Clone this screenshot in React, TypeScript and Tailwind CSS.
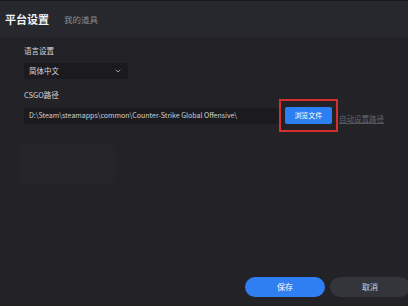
import { ChevronDown } from "lucide-react";

const font = { fontFamily: '"Noto Sans CJK SC", "Noto Sans", sans-serif' };

export default function App() {
  return (
    <div
      className="w-[408px] h-[306px] overflow-hidden flex flex-col bg-[#222227] text-white"
      style={font}
    >
      {/* Header tabs */}
      <div className="h-[37px] shrink-0 flex items-center px-[5px] bg-[#27282d] border-t border-[#18181b]">
        <span className="text-[11px] font-bold leading-none text-[#f2f2f2]">平台设置</span>
        <span className="ml-[15px] text-[8.5px] leading-none text-[#8b8b92]">我的道具</span>
      </div>

      {/* Body */}
      <div className="flex-1 px-[24px] pt-[9px]">
        <div className="text-[7.5px] leading-[10px] text-[#d8d8dc]">语言设置</div>
        <div className="mt-[7px] w-[104px] h-[16px] bg-[#1b1b1f] rounded-[2px] flex items-center justify-between pl-[5px] pr-[6px]">
          <span className="text-[7.5px] leading-none text-[#d4d4d8]">简体中文</span>
          <ChevronDown className="w-[8px] h-[8px] text-[#b5b5bb]" strokeWidth={2.5} />
        </div>

        <div className="mt-[11px] text-[7.5px] leading-[10px] text-[#d8d8dc]">CSGO路径</div>
        <div className="mt-[7px] flex items-center">
          <div className="w-[258px] h-[16px] bg-[#1b1b1f] rounded-[2px] flex items-center pl-[5px]">
            <span className="text-[7px] leading-none text-[#d0d0d4] whitespace-nowrap">
              D:\Steam\steamapps\common\Counter-Strike Global Offensive\
            </span>
          </div>
          <div className="relative w-[60px] h-[17px] flex items-center justify-center">
            <button className="w-[47px] h-[17px] rounded-[2px] bg-[#2b7ff0] text-[7px] leading-none text-white">
              浏览文件
            </button>
            <div className="absolute left-0 right-0 top-[-8px] bottom-[-8px] border-2 border-[#d3302f]" />
          </div>
          <span className="ml-[1px] mt-[6px] whitespace-nowrap text-[7.5px] leading-none text-[#66666e] underline decoration-[#55555c]">
            自动设置路径
          </span>
        </div>

        {/* faint ghost block */}
        <div className="mt-[20px] -ml-[4px] w-[95px] h-[40px] bg-[#28282d] opacity-60 blur-[2px]" />
      </div>

      {/* Footer */}
      <div className="shrink-0 flex gap-[5px] pl-[245px] pb-[9px]">
        <button className="shrink-0 w-[80px] h-[20px] rounded-full bg-[#2f7ef2] text-[8px] leading-none text-white">
          保存
        </button>
        <button className="shrink-0 w-[80px] h-[20px] rounded-full bg-[#34353b] text-[8px] leading-none text-[#d4d4d8]">
          取消
        </button>
      </div>
    </div>
  );
}
